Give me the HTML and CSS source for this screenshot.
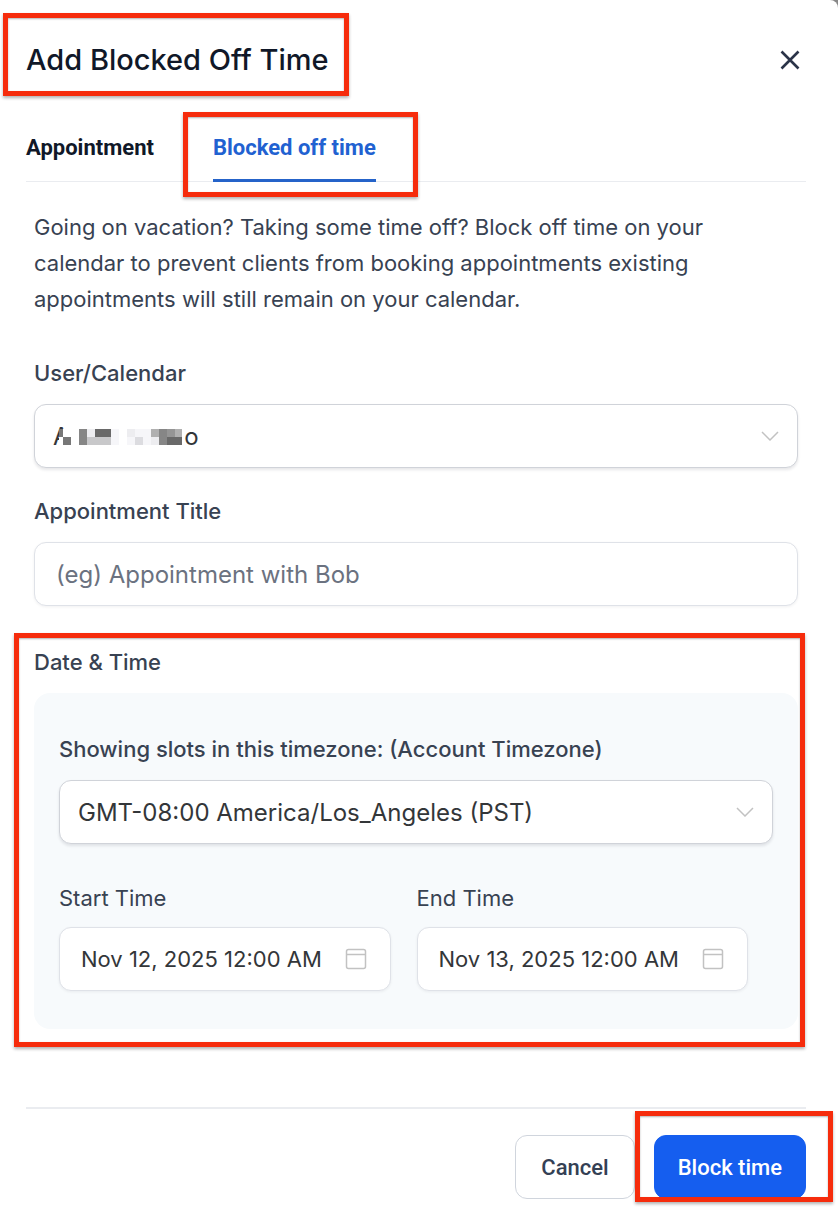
FILE: index.html
```html
<!DOCTYPE html>
<html lang="en">
  <head>
    <meta charset="utf-8" />
    <meta name="viewport" content="width=device-width, initial-scale=1.0" />
    <title>Add Blocked Off Time</title>
    <link rel="stylesheet" href="styles.css">
  </head>

  <body>
    <main class="modal">
      <header class="modal-header">
        <h1 class="mark mark-title">Add Blocked Off Time</h1>
        <button type="button" class="close" aria-label="Close">
          <svg width="20" height="20" viewBox="0 0 20 20">
            <path d="M1.5 1.5l17 17M18.5 1.5l-17 17" />
          </svg>
        </button>
      </header>

      <nav class="tabs">
        <a href="#appointment">Appointment</a>
        <a href="#blocked" class="active mark mark-tab">Blocked off time</a>
      </nav>

      <form class="content">
        <p class="intro">
          Going on vacation? Taking some time off? Block off time on your
          calendar to prevent clients from booking appointments existing
          appointments will still remain on your calendar.
        </p>

        <div class="field">
          <label for="user">User/Calendar</label>
          <div class="control">
            <select id="user">
              <option>A&nbsp;&nbsp;&nbsp;&nbsp;&nbsp;&nbsp;&nbsp;&nbsp;&nbsp;&nbsp;&nbsp;&nbsp;&nbsp;&nbsp;&nbsp;&nbsp;&nbsp;o</option>
            </select>
            <!-- pixelated name -->
            <svg class="mosaic" width="124" height="16" viewBox="0 0 124 16" shape-rendering="crispEdges">
              <path fill="#fff" d="M1 0h123v16H1z" />
              <path fill="#777" d="M1 0h4v8H1zM5 8h8v8H5z" />
              <path fill="#868686" d="M21 0h8v16h-8zM101 0h8v16h-8z" />
              <path fill="#ededf0" d="M29 0h8v8h-8zM69 0h8v8h-8zM93 8h8v8h-8z" />
              <path fill="#c8c8ca" d="M29 8h24v8H29z" />
              <path fill="#696969" d="M37 0h16v8H37zM109 8h15v8h-15z" />
              <path fill="#f6f6f9" d="M53 0h8v16h-8zM69 8h8v8h-8zM77 0h8v8h-8zM85 0h8v16h-8z" />
              <path fill="#dcdce0" d="M77 8h8v8h-8z" />
              <path fill="#b0b0b0" d="M93 0h8v8h-8zM117 0h7v8h-7z" />
              <path fill="#959595" d="M109 0h8v8h-8z" />
            </svg>
            <svg class="chevron" width="18" height="10" viewBox="0 0 18 10">
              <path d="M1 1l8 8 8-8" />
            </svg>
          </div>
        </div>

        <div class="field">
          <label for="title">Appointment Title</label>
          <input type="text" id="title" placeholder="(eg) Appointment with Bob" />
        </div>

        <section class="date-time mark mark-date">
          <h2>Date &amp; Time</h2>
          <div class="panel">
            <div class="field">
              <label for="timezone">Showing slots in this timezone: (Account Timezone)</label>
              <div class="control">
                <select id="timezone">
                  <option>GMT-08:00 America/Los_Angeles (PST)</option>
                </select>
                <svg class="chevron" width="18" height="10" viewBox="0 0 18 10">
                  <path d="M1 1l8 8 8-8" />
                </svg>
              </div>
            </div>

            <div class="times">
              <div class="field">
                <label for="start">Start Time</label>
                <div class="control">
                  <input type="text" id="start" value="Nov 12, 2025 12:00 AM" />
                  <svg class="calendar" width="22" height="22" viewBox="0 0 22 22">
                    <rect x="1.5" y="1.5" width="19" height="19" rx="2" />
                    <path d="M1.5 6.5h19" />
                  </svg>
                </div>
              </div>
              <div class="field">
                <label for="end">End Time</label>
                <div class="control">
                  <input type="text" id="end" value="Nov 13, 2025 12:00 AM" />
                  <svg class="calendar" width="22" height="22" viewBox="0 0 22 22">
                    <rect x="1.5" y="1.5" width="19" height="19" rx="2" />
                    <path d="M1.5 6.5h19" />
                  </svg>
                </div>
              </div>
            </div>
          </div>
        </section>
      </form>

      <footer>
        <button type="button" class="cancel">Cancel</button>
        <div class="mark mark-submit">
          <button type="button" class="submit">Block time</button>
        </div>
      </footer>
    </main>
  </body>
</html>
```
FILE: styles.css
```css
* {
  box-sizing: border-box;
}

body {
  margin: 0;
  background-color: #888;
  font-family: Inter, sans-serif;
  font-size: 22px;
  color: #384252;
}

.modal {
  min-height: 100vh;
  padding: 32px 32px 14px 26px;
  background-color: #fff;
  border-top-right-radius: 8px;
  overflow: hidden;
}

/* red highlight boxes */
.mark {
  position: relative;
}

.mark::after {
  content: "";
  position: absolute;
  border: 5px solid #f62c0c;
  box-shadow: 0 2px 3px rgba(0, 0, 0, 0.3), inset 0 1px 2px rgba(0, 0, 0, 0.3);
  pointer-events: none;
}

.mark-title::after {
  inset: -19px -20px -8px -23px;
}

.mark-tab::after {
  inset: 0 -42px -18px -30px;
}

.mark-date::after {
  inset: -11px -7px -18px -20px;
}

.mark-submit::after {
  inset: -24px -27px -3px -19px;
}

.modal-header {
  display: flex;
  justify-content: space-between;
  align-items: center;
}

h1 {
  margin: 0;
  font-size: 29px;
  line-height: 56px;
  font-weight: 500;
  color: #101828;
}

.close {
  display: flex;
  padding: 6px;
  border: 0;
  background: none;
}

.close path {
  fill: none;
  stroke: #2b3448;
  stroke-width: 2.6;
}

.tabs {
  display: flex;
  gap: 59px;
  margin-top: 24px;
  border-bottom: 1px solid #eaecf0;
}

.tabs a {
  height: 70px;
  margin-bottom: -1px;
  line-height: 72px;
  border-bottom: 3px solid transparent;
  font-family: Roboto, sans-serif;
  font-weight: 700;
  color: #101828;
  text-decoration: none;
}

.tabs .active {
  border-color: #2563c9;
  color: #2161d1;
}

.content {
  padding: 0 8px;
}

.intro {
  margin: 27px 0 38px;
  line-height: 36px;
}

.field {
  display: flex;
  flex-direction: column;
  gap: 13px;
  margin-bottom: 25px;
}

label,
h2 {
  margin: 0;
  font-size: 22px;
  line-height: 36px;
  font-weight: 500;
}

.control {
  position: relative;
}

select,
input {
  display: block;
  width: 100%;
  height: 64px;
  padding: 0 21px;
  border: 1px solid #dfe2e8;
  border-radius: 12px;
  background-color: #fff;
  box-shadow: 0 1px 3px rgba(16, 24, 40, 0.06);
  font-family: Inter, sans-serif;
  font-size: 24px;
  color: #333639;
}

select {
  appearance: none;
  padding: 0 48px 0 18px;
  border-color: #d0d3d9;
  box-shadow: 0 2px 3px rgba(16, 24, 40, 0.1);
}

input::placeholder {
  color: #6b7280;
}

.chevron,
.calendar {
  position: absolute;
  right: 19px;
  top: 27px;
  fill: none;
  stroke: #c2c2c2;
  stroke-width: 1.5;
  pointer-events: none;
}

.calendar {
  right: 24px;
  top: 21px;
}

.mosaic {
  position: absolute;
  left: 24px;
  top: 25px;
  pointer-events: none;
}

.date-time {
  margin-top: 38px;
}

.panel {
  margin-top: 13px;
  padding: 38px 25px;
  border-radius: 16px;
  background-color: #f7fafc;
}

.times {
  display: grid;
  grid-template-columns: 1fr 1fr;
  gap: 26px;
  margin-top: 36px;
  padding-right: 25px;
}

.times .field {
  gap: 11px;
  margin: 0;
}

.times label {
  font-weight: 400;
}

.times input {
  font-size: 22px;
}

footer {
  display: flex;
  justify-content: flex-end;
  gap: 19px;
  margin-top: 78px;
  padding-top: 26px;
  border-top: 2px solid #eaecf0;
}

footer button {
  height: 64px;
  padding: 0 23px;
  border: 1px solid #155eef;
  border-radius: 12px;
  font-family: Roboto, sans-serif;
  font-size: 22px;
  font-weight: 500;
}

.cancel {
  padding: 0 25px;
  border-color: #d0d5dd;
  background-color: #fff;
  color: #344054;
}

.submit {
  background-color: #155eef;
  color: #fff;
}
```
